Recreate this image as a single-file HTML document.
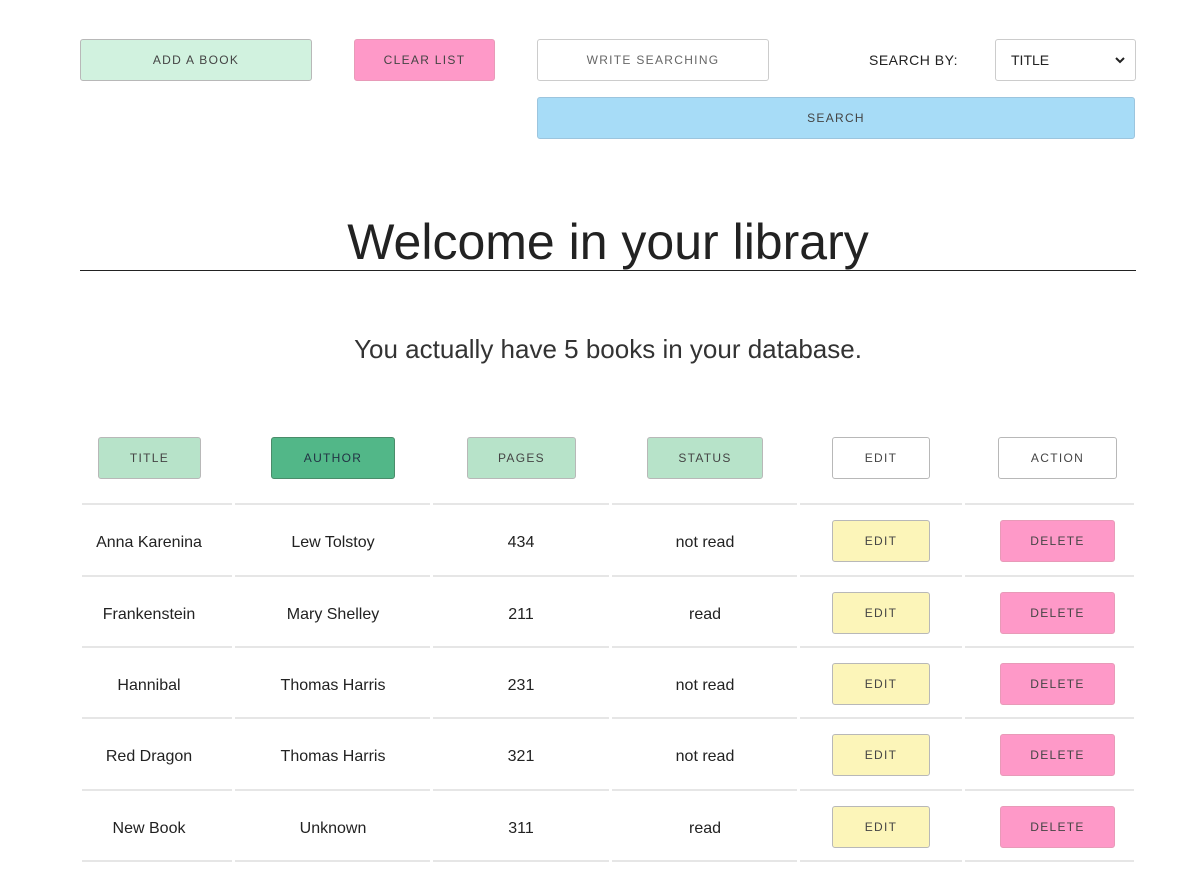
<!DOCTYPE html>
<html><head><meta charset="utf-8"><style>
*{box-sizing:border-box;margin:0;padding:0}
body{width:1188px;height:884px;background:#fff;font-family:"Liberation Sans",sans-serif;position:relative;overflow:hidden;color:#222}
.b{position:absolute;border:1px solid #b8b8b8;border-radius:3px;font-size:12px;letter-spacing:1.3px;color:#444;display:flex;align-items:center;justify-content:center;height:42px}
.t{position:absolute;font-size:16px;color:#222;text-align:center;transform:translateX(-50%);white-space:nowrap}
.ln{position:absolute;height:2px;background:#e6e6e6}
</style></head><body>
<div class="b" style="left:80px;top:39px;width:232px;background:#d1f2df">ADD A BOOK</div>
<div class="b" style="left:354px;top:39px;width:141px;background:#fe99c8;border-color:#e89ab8">CLEAR LIST</div>
<div class="b" style="left:537px;top:39px;width:232px;background:#fff;border-color:#ccc;color:#666">WRITE SEARCHING</div>
<div style="position:absolute;left:869px;top:52px;font-size:14px;color:#222;letter-spacing:0.5px">SEARCH BY:</div>
<div class="b" style="left:995px;top:39px;width:141px;background:#fff;border-color:#ccc;justify-content:space-between;padding:0 10px 0 15px;font-size:14px;letter-spacing:0;color:#222">TITLE<svg width="10" height="7" viewBox="0 0 10 7"><path d="M1 1l4 4 4-4" stroke="#222" stroke-width="2" fill="none"/></svg></div>
<div class="b" style="left:537px;top:97px;width:598px;background:#a7dcf7;border-color:#9cc5de">SEARCH</div>
<div style="position:absolute;left:0;width:1216px;top:213px;text-align:center;font-size:50px;color:#222;font-weight:300">Welcome in your library</div>
<div style="position:absolute;left:80px;top:270px;width:1056px;height:1px;background:#222"></div>
<div style="position:absolute;left:0;width:1216px;top:334px;text-align:center;font-size:26px;color:#333;font-weight:300">You actually have 5 books in your database.</div>
<div class="b" style="left:98px;top:437px;width:103px;background:#b7e3c9">TITLE</div>
<div class="b" style="left:271px;top:437px;width:124px;background:#52b788;border-color:#4a8c6a;color:#234">AUTHOR</div>
<div class="b" style="left:467px;top:437px;width:109px;background:#b7e3c9">PAGES</div>
<div class="b" style="left:647px;top:437px;width:116px;background:#b7e3c9">STATUS</div>
<div class="b" style="left:832px;top:437px;width:98px;background:#fff">EDIT</div>
<div class="b" style="left:998px;top:437px;width:119px;background:#fff">ACTION</div>
<div id="rows"></div>
<script>
var cols=[[82,232],[235,430],[433,609],[612,797],[800,962],[965,1134]];
var cx=[149,333,521,705];
var data=[["Anna Karenina","Lew Tolstoy","434","not read"],["Frankenstein","Mary Shelley","211","read"],["Hannibal","Thomas Harris","231","not read"],["Red Dragon","Thomas Harris","321","not read"],["New Book","Unknown","311","read"]];
var h="";var lines=[503,575,646,717,789,860];
lines.forEach(function(y){cols.forEach(function(c){h+='<div class="ln" style="top:'+y+'px;left:'+c[0]+'px;width:'+(c[1]-c[0])+'px"></div>'})});
data.forEach(function(r,i){var cy=(lines[i]+lines[i+1])/2+2;
for(var j=0;j<4;j++){h+='<div class="t" style="left:'+cx[j]+'px;top:'+(cy-7)+'px">'+r[j]+'</div>'}
h+='<div class="b" style="left:832px;top:'+(cy-21)+'px;width:98px;background:#fcf5b9">EDIT</div>';
h+='<div class="b" style="left:1000px;top:'+(cy-21)+'px;width:115px;background:#fe99c8;border-color:#e89ab8">DELETE</div>';});
document.getElementById("rows").innerHTML=h;
</script>
</body></html>
